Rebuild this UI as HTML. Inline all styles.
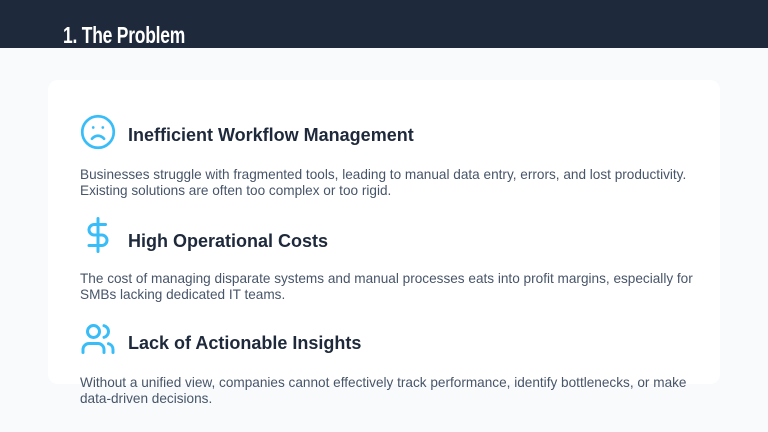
<!DOCTYPE html>
<html><head><meta charset="utf-8"><style>
*{margin:0;padding:0;box-sizing:border-box}
body{width:768px;height:432px;background:#f8fafc;font-family:"Liberation Sans",sans-serif;position:relative;overflow:hidden}
.hdr{position:absolute;left:0;top:0;width:768px;height:48px;background:#1e293b}
.hdr h1{position:absolute;left:63px;top:22px;font-family:"Liberation Sans Narrow","Liberation Sans",sans-serif;font-weight:bold;font-size:23px;color:#fff;line-height:26px;transform:scaleX(0.76);transform-origin:left;letter-spacing:-0.3px}
.card{position:absolute;left:48px;top:80px;width:672px;height:304px;background:#fff;border-radius:10px}
.ic{position:absolute;left:80px}
.h{position:absolute;left:128px;font-size:18px;font-weight:bold;color:#1e293b;line-height:20px}
.p{position:absolute;left:80px;font-size:13.6px;color:#475569;line-height:16px;width:660px;white-space:nowrap}
</style></head><body>
<div class="hdr"><h1>1. The Problem</h1></div>
<div class="card"></div>
<svg class="ic" style="top:114px" width="36" height="36" viewBox="0 0 24 24" fill="none" stroke="#38bdf8" stroke-width="1.8" stroke-linecap="round"><circle cx="12" cy="12" r="10.5"/><path d="M16 16.5s-1.5-2-4-2-4 2-4 2"/><path d="M8.8 9h.01M15.2 9h.01"/></svg>
<div class="h" style="top:125px">Inefficient Workflow Management</div>
<div class="p" style="top:167px">Businesses struggle with fragmented tools, leading to manual data entry, errors, and lost productivity.<br>Existing solutions are often too complex or too rigid.</div>
<svg class="ic" style="top:217px" width="36" height="36" viewBox="0 0 24 24" fill="none" stroke="#38bdf8" stroke-width="2" stroke-linecap="round"><path d="M12 1v22"/><path d="M17 5H9.5a3.5 3.5 0 0 0 0 7h5a3.5 3.5 0 0 1 0 7H6"/></svg>
<div class="h" style="top:231px">High Operational Costs</div>
<div class="p" style="top:271px">The cost of managing disparate systems and manual processes eats into profit margins, especially for<br>SMBs lacking dedicated IT teams.</div>
<svg class="ic" style="top:321px" width="36" height="36" viewBox="0 0 24 24" fill="none" stroke="#38bdf8" stroke-width="2" stroke-linecap="round"><path d="M16 21v-2a4 4 0 0 0-4-4H6a4 4 0 0 0-4 4v2"/><circle cx="9" cy="7" r="4"/><path d="M22 21v-2a4 4 0 0 0-3-3.87M16 3.13a4 4 0 0 1 0 7.75"/></svg>
<div class="h" style="top:333px">Lack of Actionable Insights</div>
<div class="p" style="top:375px">Without a unified view, companies cannot effectively track performance, identify bottlenecks, or make<br>data-driven decisions.</div>
</body></html>
